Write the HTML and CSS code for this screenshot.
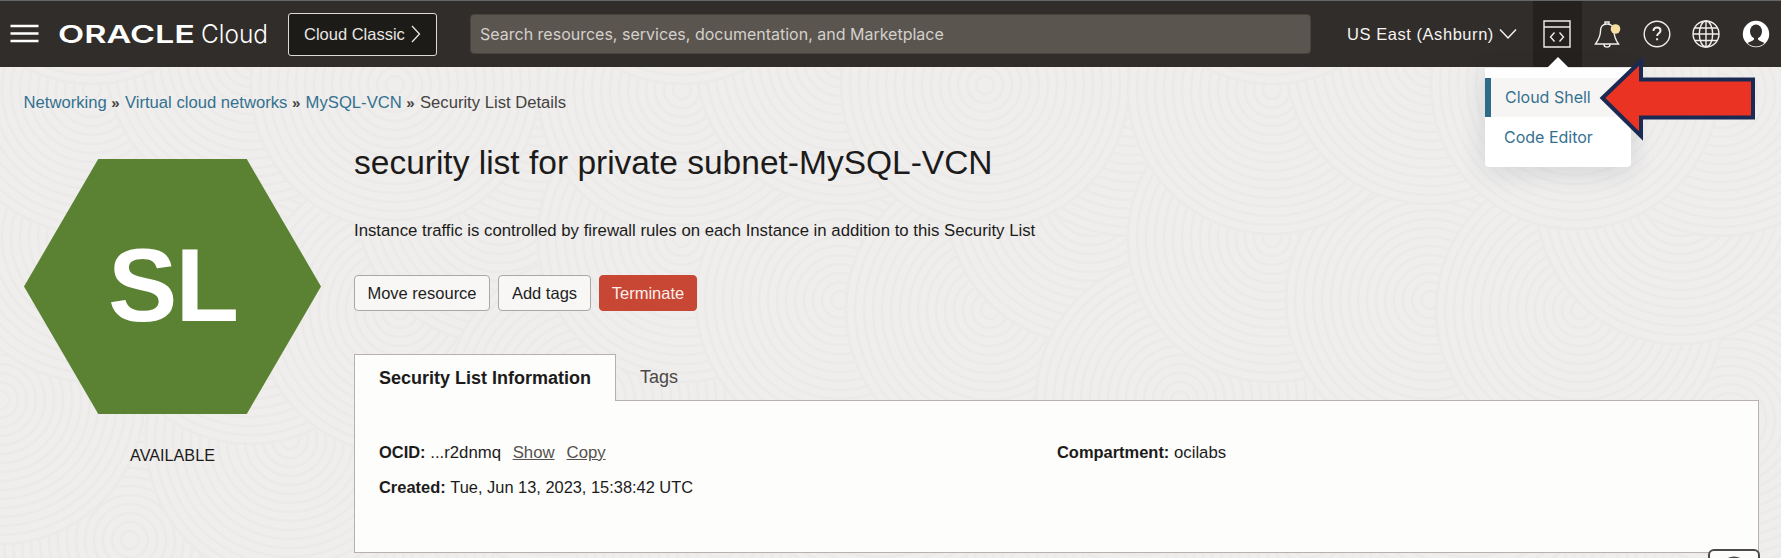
FILE: index.html
```html
<!DOCTYPE html>
<html lang="en">
<head>
<meta charset="utf-8">
<title>Security List Details</title>
<link rel="stylesheet" href="styles.css">
</head>
<body>
<div class="app">
  <svg class="texture" width="1781" height="558" aria-hidden="true">
    <defs>
      <g id="rings">
        <circle class="disc" r="144"/>
        <circle r="9"/><circle r="18"/><circle r="27"/><circle r="36"/><circle r="45"/><circle r="54"/><circle r="63"/><circle r="72"/><circle r="81"/><circle r="90"/><circle r="99"/><circle r="108"/><circle r="117"/><circle r="126"/><circle r="135"/><circle r="144"/>
      </g>
      <g id="tile">
        <use href="#rings" x="130" y="540"/>
        <use href="#rings" x="430" y="560"/>
        <use href="#rings" x="550" y="420"/>
        <use href="#rings" x="290" y="440"/>
        <use href="#rings" x="0" y="400"/>
        <use href="#rings" x="92" y="238"/>
        <use href="#rings" x="250" y="300"/>
        <use href="#rings" x="400" y="310"/>
        <use href="#rings" x="500" y="200"/>
        <use href="#rings" x="92" y="90"/>
        <use href="#rings" x="250" y="60"/>
        <use href="#rings" x="541" y="92"/>
        <use href="#rings" x="395" y="85"/>
        <use href="#rings" x="92" y="-60"/>
      </g>
    </defs>
    <use href="#tile" x="-590"/>
    <use href="#tile" x="0"/>
    <use href="#tile" x="590"/>
    <use href="#tile" x="1180"/>
  </svg>

  <header class="topbar">
    <svg class="menu-icon" width="29" height="20" viewBox="0 0 29 20"><path d="M.5 2h28M.5 9.500h28M.5 17h28"/></svg>
    <svg class="brand" width="212" height="30" viewBox="0 0 212 30">
      <text class="brand-oracle" x="-1" y="24" textLength="137" lengthAdjust="spacingAndGlyphs">ORACLE</text>
      <text class="brand-cloud" x="142" y="24" textLength="67" lengthAdjust="spacingAndGlyphs">Cloud</text>
    </svg>
    <button class="classic">Cloud Classic<svg width="10" height="18" viewBox="0 0 10 18"><path d="M1 1l7.500 8L1 17"/></svg></button>
    <div class="search">Search resources, services, documentation, and Marketplace</div>
    <div class="region">US East (Ashburn)<svg width="18" height="12" viewBox="0 0 18 12"><path d="M1 1.500l8 8.500 8-8.500"/></svg></div>
    <div class="tools">
      <div class="tool active">
        <svg width="28" height="28" viewBox="0 0 28 28"><path d="M1 1h26v26H1zM1 7h26M11.500 12.500L7.500 17l4 4.500M16.500 12.500l4 4.500-4 4.500"/></svg>
      </div>
      <div class="tool">
        <svg width="28" height="28" viewBox="0 0 28 28"><path d="M14 4c-4.500 0-6.500 3-6.500 7 0 6-2.500 9.500-5 13h23c-2.500-3.500-4.500-7-4.500-13 0-4-2.500-7-7-7zM12 4V2h4v2M11 24.500c0 3.500 6 3.500 6 0"/><circle class="dot" cx="22.500" cy="9" r="4.800"/></svg>
      </div>
      <div class="tool">
        <svg width="28" height="28" viewBox="0 0 28 28"><circle cx="14" cy="14" r="12.800"/><path class="mark" d="M10.500 11c0-2.200 1.500-3.500 3.500-3.500s3.500 1.300 3.500 3.200c0 2.400-3.400 2.600-3.400 5.300M14.100 18.300v2"/></svg>
      </div>
      <div class="tool">
        <svg width="28" height="28" viewBox="0 0 28 28"><circle cx="14" cy="14" r="13"/><ellipse cx="14" cy="14" rx="6.700" ry="13"/><path d="M14 1v26M2.500 8h23M1 14h26M3 20.500h22"/></svg>
      </div>
      <div class="tool">
        <svg width="28" height="28" viewBox="0 0 28 28"><circle class="solid" cx="14" cy="14" r="13.200"/><ellipse class="hole" cx="14" cy="11.500" rx="6" ry="7"/><path class="hole" d="M12 17h4v2.500c2 2 4.500 2.300 6.500 3.500-4 4.500-13 4.500-17 0 2-1.200 4.500-1.500 6.500-3.500z"/></svg>
      </div>
    </div>
  </header>

  <nav class="crumbs">
    <a>Networking</a><i>»</i><a>Virtual cloud networks</a><i>»</i><a>MySQL-VCN</a><i>»</i><span>Security List Details</span>
  </nav>

  <div class="content">
    <aside class="status">
      <div class="hexagon">SL</div>
      <div class="state">AVAILABLE</div>
    </aside>
    <main class="details">
      <h1>security list for private subnet-MySQL-VCN</h1>
      <p class="summary">Instance traffic is controlled by firewall rules on each Instance in addition to this Security List</p>
      <div class="actions">
        <button class="btn move">Move resource</button>
        <button class="btn tags">Add tags</button>
        <button class="btn danger">Terminate</button>
      </div>
      <div class="tabs">
        <div class="tab selected">Security List Information</div>
        <div class="tab">Tags</div>
      </div>
      <section class="panel">
        <div class="col">
          <div class="field"><b>OCID:</b> ...r2dnmq <a class="show">Show</a><a class="copy">Copy</a></div>
          <div class="field"><b>Created:</b> <span class="date">Tue, Jun 13, 2023, 15:38:42 UTC</span></div>
        </div>
        <div class="col">
          <div class="field"><b>Compartment:</b> ocilabs</div>
        </div>
      </section>
    </main>
  </div>

  <div class="dropdown">
    <div class="option current">Cloud Shell</div>
    <div class="option">Code Editor</div>
  </div>
  <svg class="arrow" width="160" height="92" viewBox="0 0 160 92"><path d="M4.500 46L43 9v18.500h112V65.500H43V84z"/></svg>
  <div class="help-widget"><svg width="28" height="9" viewBox="0 0 28 9"><circle cx="14" cy="14" r="12.500"/></svg></div>
</div>
</body>
</html>
```

FILE: styles.css
```css
* { box-sizing: border-box; }
body { margin: 0; background: #fff; font-family: "Liberation Sans", Arial, sans-serif; font-size: 16.65px; color: #1c1b1a; }
button { font: inherit; }
svg { display: block; fill: none; }

.app { position: relative; width: 1781px; height: 558px; overflow: hidden; background: #efeeed; }
.texture { position: absolute; left: 0; top: 0; stroke: #ebeae9; stroke-width: 2.6; }
.texture .disc { fill: #efeeed; }

.topbar { position: relative; display: flex; align-items: center; height: 67px; padding-left: 10px; background: #312d2a; border-top: 1px solid #63676a; color: #f5f4f2; }
.menu-icon { stroke: #fff; stroke-width: 2.4; }
.brand { margin-left: 20px; fill: #fff; overflow: visible; }
.brand-oracle { font: 600 24.500px Inter, sans-serif; }
.brand-cloud { font: 300 25px Inter, sans-serif; }
.classic { display: flex; align-items: center; justify-content: space-between; width: 149px; height: 43px; margin-left: 17px; padding: 0 15px; border: 1px solid #dddbd8; border-radius: 3px; background: #1c1b17; color: #e8e6e3; font-size: 16.5px; }
.classic svg { stroke: #e8e6e3; stroke-width: 1.3; }
.search { width: 841px; height: 40px; margin-left: 33px; padding-left: 9px; border: 1px solid #49433e; border-radius: 4px; background: #5b5550; color: #d4d0cb; font: 16px/39px Inter, sans-serif; }
.region { display: flex; align-items: center; gap: 5px; margin-left: 36px; font-size: 16.5px; letter-spacing: .55px; white-space: nowrap; }
.region svg { stroke: #f5f4f2; stroke-width: 1.5; }
.tools { display: flex; align-self: stretch; margin-left: auto; }
.tool { display: flex; align-items: center; justify-content: center; width: 49.7px; stroke: #f0eeeb; stroke-width: 1.4; }
.tool.active { background: #25211e; }
.tool .dot { fill: #f4dfa0; stroke: none; }
.tool .mark { stroke-width: 2; }
.tool .solid { fill: #fff; stroke: none; }
.tool .hole { fill: #312d2a; stroke: none; }

.crumbs { position: relative; display: flex; height: 71px; padding-left: 23.5px; line-height: 72px; color: #45423f; }
.crumbs a { color: #33718f; }
.crumbs i { width: 18.2px; padding-left: 4.5px; font-style: normal; font-weight: 700; font-size: 15px; }

.content { position: relative; display: flex; }
.status { width: 297px; margin: 21px 33px 0 24px; }
.hexagon { height: 255px; background: #5b8132; clip-path: polygon(25% 0, 75% 0, 100% 50%, 75% 100%, 25% 100%, 0 50%); color: #fff; font-weight: 700; font-size: 104px; line-height: 253px; letter-spacing: -2px; text-align: center; }
.state { margin-top: 31px; line-height: 20px; font-size: 16.2px; text-align: center; }

.details { width: 1405px; }
h1 { margin: 0; font-weight: 400; font-size: 33.5px; line-height: 49px; }
.summary { margin: 34px 0 0; line-height: 20px; font-size: 16.75px; }
.actions { display: flex; gap: 8px; margin-top: 34px; }
.btn { height: 36px; padding: 0; border: 1px solid #aaa7a4; border-radius: 4px; background: #f8f7f6; color: #201e1c; font-size: 16.5px; line-height: 35px; }
.move { width: 136px; }
.tags { width: 93px; }
.danger { width: 98px; border-color: #c74634; background: #c74634; color: #fbeeeb; }
.tabs { display: flex; margin-top: 43px; }
.tab { height: 46px; padding-left: 24px; font-size: 18px; line-height: 46px; color: #4c4845; }
.tab.selected { position: relative; width: 262px; height: 47px; margin-bottom: -1px; border: 1px solid #b7b0ae; border-bottom: 0; background: #fdfdfc; font-weight: 700; line-height: 47px; color: #1c1b1a; z-index: 1; }
.panel { display: flex; height: 153px; padding: 34px 0 0 24px; border: 1px solid #b7b0ae; background: #fdfdfc; }
.col { width: 678px; }
.field { line-height: 35px; white-space: nowrap; font-size: 16.75px; }
.field b { font-size: 16.45px; }
.field a { text-decoration: underline; color: #55514e; }
.show { margin-left: 7px; }
.copy { margin-left: 12px; }
.date { font-size: 16.4px; }

.dropdown { position: absolute; left: 1485px; top: 68px; width: 146px; height: 99px; padding-top: 10px; border-radius: 0 0 4px 4px; background: #fff; box-shadow: 0 5px 26px rgba(40, 36, 60, .13); font-family: Inter, sans-serif; font-size: 16px; color: #35718f; }
.dropdown::before { content: ""; position: absolute; left: 62px; top: -11px; width: 22px; height: 11px; background: #fff; clip-path: polygon(50% 0, 100% 100%, 0 100%); }
.option { height: 39px; padding-left: 19px; line-height: 41px; }
.option.current { padding-left: 14px; border-left: 6px solid #2f6a88; background: #f6f5f4; line-height: 39px; }
.arrow { position: absolute; left: 1598px; top: 52px; fill: #ea3323; stroke: #1b2a52; stroke-width: 4; overflow: visible; }
.help-widget { position: absolute; left: 1708px; top: 549px; width: 52px; height: 30px; border: 2px solid #4b4a48; border-radius: 6px; background: #fdfdfc; }
.help-widget svg { margin: 5px auto 0; stroke: #4b4a48; stroke-width: 2; }
```
